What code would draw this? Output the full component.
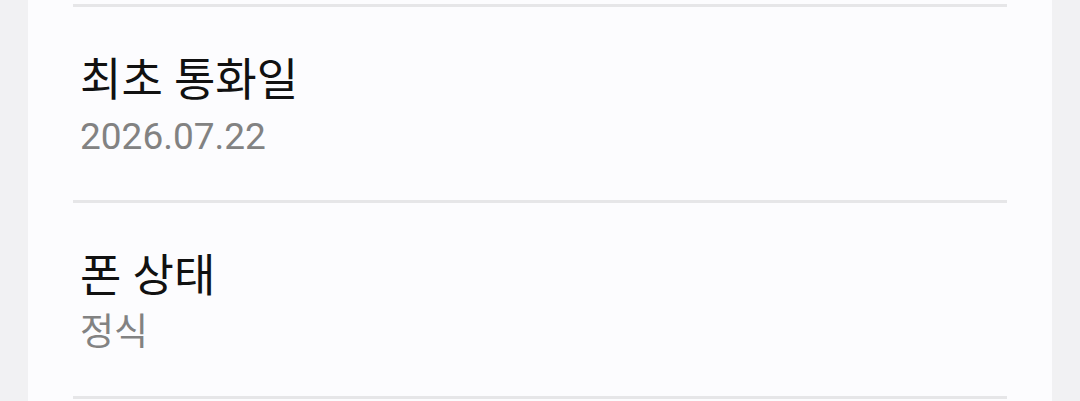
const rows = [
  { label: '최초 통화일', value: '2026.07.22' },
  { label: '폰 상태', value: '정식' },
]

export default function App() {
  return (
    <div className="w-[1080px] h-[401px] overflow-hidden bg-[#f1f1f3] px-[28px]">
      <div className="h-full bg-[#fcfcfe] px-[45px] pt-[4px]">
        {rows.map((row) => (
          <div key={row.label}>
            <div className="h-[3px] bg-[#e6e6e8]" />
            <div className="h-[193px] pt-[44px] pl-[7px] font-['Roboto','Noto_Sans_CJK_KR',sans-serif]">
              <div className="text-[45px] leading-[60px] text-[#111111]">{row.label}</div>
              <div className="mt-[2px] text-[37px] leading-[48px] text-[#828282]">{row.value}</div>
            </div>
          </div>
        ))}
        <div className="h-[3px] bg-[#e6e6e8]" />
      </div>
    </div>
  )
}
